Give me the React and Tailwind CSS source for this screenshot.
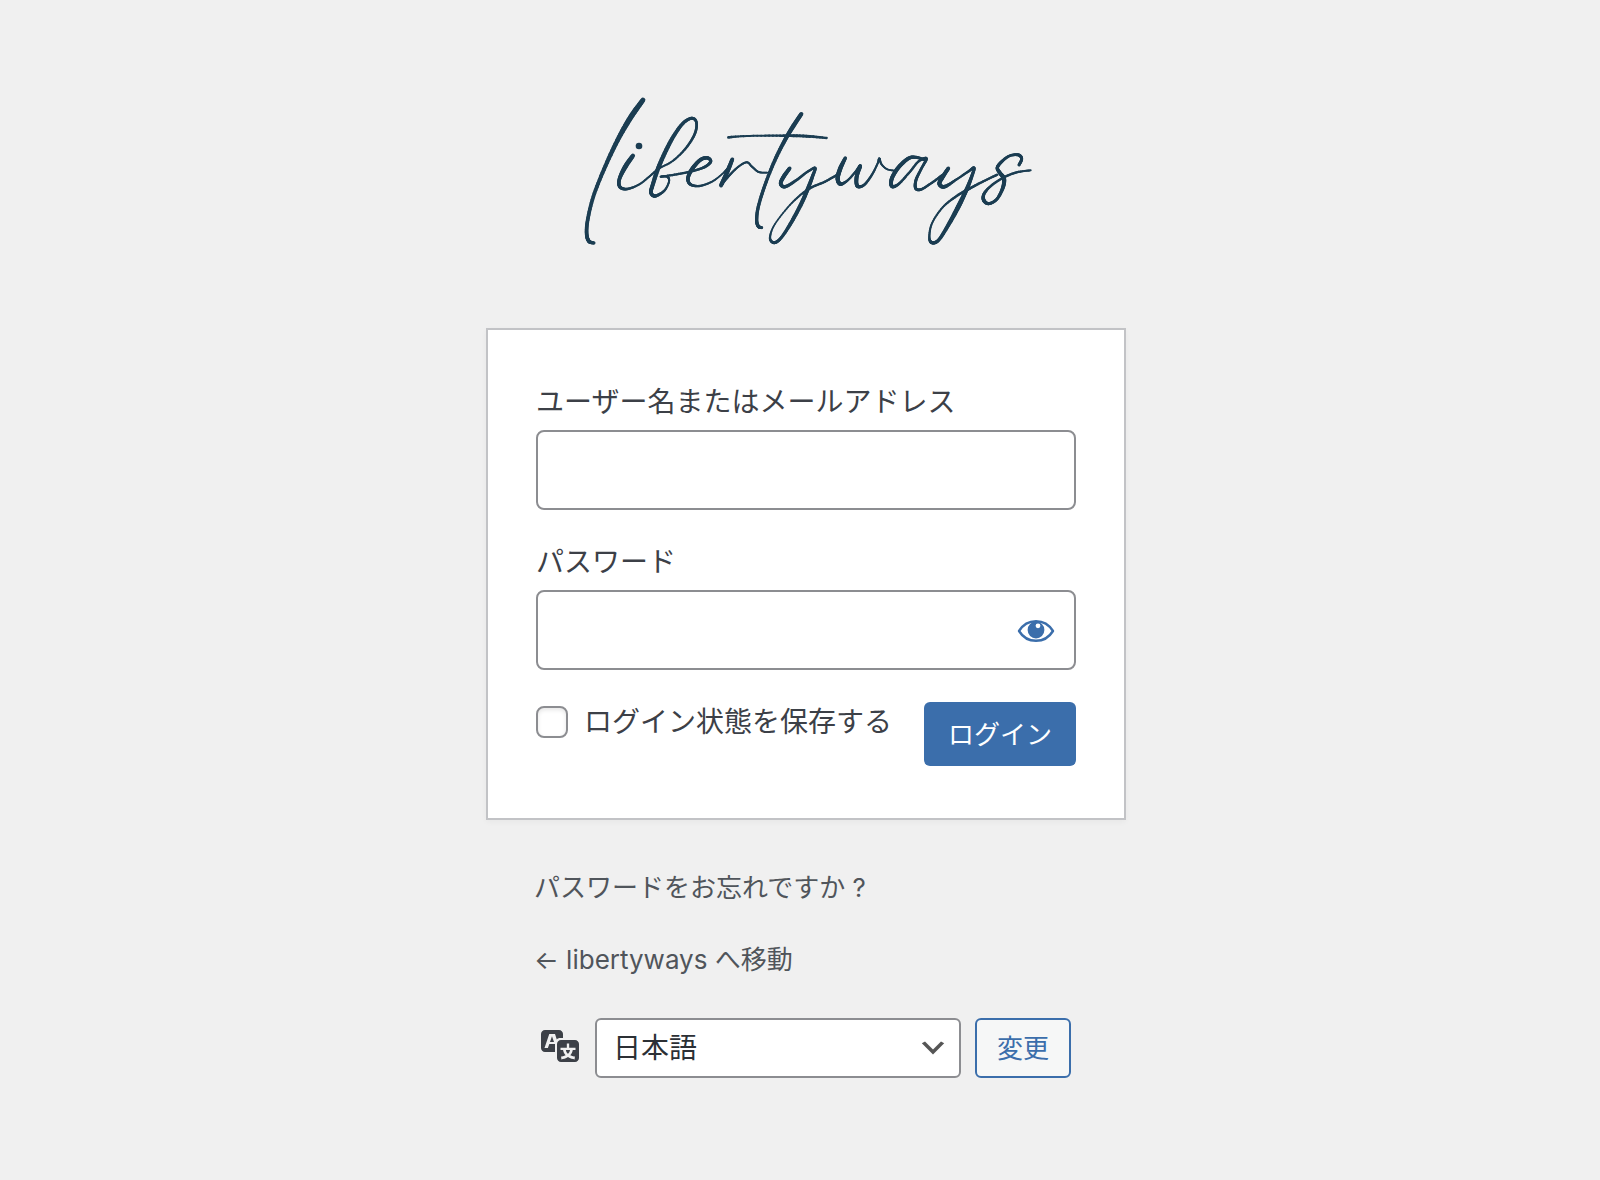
import { useMemo, useState } from "react";

// ロゴの筆跡: [x, y, 線幅] の並び
const STROKES = [
  // l
  [[219, 60, 12], [182, 112, 14], [142, 182, 12], [102, 268, 10], [70, 350, 9], [53, 420, 9], [50, 462, 9], [57, 484, 9], [72, 489, 7]],
  // i
  [[189, 227, 10], [166, 260, 12], [148, 298, 9], [150, 321, 8], [172, 327, 6], [208, 313, 4], [240, 288, 4], [266, 266, 4], [308, 243, 4], [348, 204, 5], [375, 160, 6], [379, 126, 6], [364, 115, 7], [336, 133, 8], [302, 184, 10], [268, 256, 11], [248, 315, 10], [243, 338, 9], [256, 348, 8], [283, 332, 5], [297, 305, 4], [292, 290, 5], [272, 290, 4]],
  // e
  [[272, 290, 4], [320, 283, 5], [368, 273, 5], [404, 261, 6], [422, 245, 7], [413, 234, 8], [392, 239, 9], [367, 266, 10], [354, 294, 9], [361, 313, 7], [388, 318, 5], [424, 306, 4], [452, 286, 3], [472, 266, 3]],
  // r
  [[487, 238, 9], [472, 275, 11], [453, 316, 10]],
  [[453, 316, 6], [480, 284, 5], [508, 258, 4], [531, 247, 4], [546, 260, 4], [566, 276, 4], [592, 278, 3]],
  // t
  [[694, 102, 10], [670, 138, 11], [645, 180, 10], [614, 242, 9], [585, 315, 8], [565, 380, 8], [560, 420, 8], [565, 439, 8], [575, 443, 7]],
  [[475, 172, 6], [530, 168, 4], [620, 167, 5], [700, 168, 7], [770, 174, 5]],
  // y
  [[659, 265, 9], [641, 290, 10], [632, 311, 9], [646, 320, 8], [680, 300, 6], [710, 277, 5], [735, 264, 6], [728, 288, 8], [712, 330, 10], [692, 375, 10], [661, 432, 9], [632, 475, 7], [612, 488, 7], [600, 474, 5], [612, 437, 3], [650, 386, 3], [690, 346, 4], [725, 322, 5], [765, 305, 5], [805, 282, 5]],
  // w
  [[826, 234, 8], [811, 265, 11], [803, 295, 11], [811, 312, 9], [832, 302, 5], [856, 276, 5], [871, 258, 8], [860, 290, 10], [862, 318, 9], [882, 315, 6], [906, 284, 5], [923, 250, 4], [928, 236, 5], [934, 252, 4], [950, 267, 3], [972, 272, 3]],
  // a
  [[1066, 240, 6], [1038, 232, 7], [1014, 236, 9], [984, 264, 10], [965, 297, 10], [966, 319, 9], [986, 312, 6], [1020, 275, 5], [1046, 244, 5], [1069, 236, 7], [1053, 268, 6], [1038, 300, 7], [1037, 325, 7], [1054, 328, 6], [1086, 308, 5], [1118, 285, 6]],
  // y
  [[1135, 265, 9], [1120, 288, 10], [1108, 311, 10], [1124, 320, 9], [1160, 298, 5], [1194, 275, 5], [1212, 264, 7], [1205, 290, 8], [1190, 328, 10], [1165, 380, 12], [1135, 435, 10], [1106, 480, 8], [1086, 488, 8], [1078, 472, 5], [1086, 430, 4], [1118, 382, 4], [1160, 348, 5], [1200, 325, 6], [1240, 304, 5], [1282, 284, 5]],
  // s
  [[1347, 255, 7], [1355, 237, 7], [1346, 225, 7], [1320, 227, 6], [1296, 244, 7], [1282, 263, 8], [1290, 279, 9], [1302, 297, 11], [1298, 325, 9], [1280, 358, 7], [1256, 371, 7], [1241, 360, 9], [1243, 340, 7], [1266, 315, 5], [1302, 292, 5], [1340, 277, 5], [1382, 271, 4]],
];

const STEPS = 8;
const INK = 2; // インクのにじみ分

const spline = (a, b, c, d, t) =>
  0.5 * (2 * b + (c - a) * t + (2 * a - 5 * b + 4 * c - d) * t * t + (3 * b - a - 3 * c + d) * t * t * t);

// 点の間を Catmull-Rom で補間して、幅の変わる短い線分にする
function toSegments(points) {
  const out = [];
  for (let i = 0; i < points.length - 1; i++) {
    const p0 = points[Math.max(i - 1, 0)];
    const p1 = points[i];
    const p2 = points[i + 1];
    const p3 = points[Math.min(i + 2, points.length - 1)];
    for (let s = 0; s < STEPS; s++) {
      out.push([0, 1, 2].map((k) => spline(p0[k], p1[k], p2[k], p3[k], s / STEPS)));
    }
  }
  out.push(points[points.length - 1]);
  return out.slice(1).map((p, i) => ({ from: out[i], to: p }));
}

function Logo() {
  const segments = useMemo(() => STROKES.flatMap(toSegments), []);
  return (
    <svg viewBox="-12 0 1440 540" className="w-[480px] max-w-full" stroke="#1b3d52" strokeLinecap="round" aria-hidden="true">
      {segments.map(({ from, to }, i) => (
        <line key={i} x1={from[0]} y1={from[1]} x2={to[0]} y2={to[1]} strokeWidth={to[2] + INK} />
      ))}
      <circle cx="207" cy="198" r="10" fill="#1b3d52" stroke="none" />
    </svg>
  );
}

function EyeIcon() {
  return (
    <svg viewBox="0 0 40 40" className="size-10" aria-hidden="true">
      <path d="M3 21C7 14.500 13 11.200 20 11.200S33 14.500 37 21C33 27.500 27 30.800 20 30.800S7 27.500 3 21Z" fill="none" stroke="currentColor" strokeWidth="2.400" strokeLinejoin="round" />
      <circle cx="20" cy="20" r="8.400" fill="currentColor" />
      <circle cx="22" cy="15.800" r="2.400" fill="#fff" />
    </svg>
  );
}

function TranslateIcon() {
  return (
    <svg viewBox="0 0 20 20" className="size-10 shrink-0" fill="currentColor" aria-hidden="true">
      <path d="M11 7H9.490c-.63 0-1.250.3-1.590.7L7 5H4.130l-2.390 7h1.690l.74-2H7v4H2c-1.100 0-2-.9-2-2V5c0-1.100.9-2 2-2h7c1.100 0 2 .9 2 2v2zM6.510 9H4.490l1-2.930zM10 8h7c1.100 0 2 .9 2 2v7c0 1.100-.9 2-2 2h-7c-1.100 0-2-.9-2-2v-7c0-1.100.9-2 2-2zm7.250 5v-1.080h-3.170V9.750h-1.160v2.170H9.750V13h1.280c.11.85.56 1.850 1.280 2.620-.87.36-1.890.62-2.310.62-.01.02.22.97.2 1.460.84 0 2.210-.5 3.280-1.150 1.090.65 2.480 1.150 3.340 1.150-.02-.49.2-1.440.2-1.460-.43 0-1.490-.27-2.380-.63.7-.77 1.140-1.770 1.250-2.610h1.360zm-3.810 1.930c-.5-.46-.85-1.130-1.010-1.930h2.090c-.17.8-.51 1.470-1 1.930l-.04.03s-.03-.02-.04-.03z" />
    </svg>
  );
}

const INPUT = "block w-full h-20 rounded-lg border-2 border-[#8c8d91] bg-white px-2.5 text-[48px] text-[#2c3338] outline-none focus:border-[#3b6eab]";

export default function App() {
  const [showPassword, setShowPassword] = useState(false);

  return (
    <div className="min-h-screen bg-[#f0f0f0] pt-20 pb-12 pl-3 text-[#3c4047] font-['Inter','Noto_Sans_CJK_JP',sans-serif]" lang="ja">
      <main className="mx-auto w-full max-w-[640px]">
        <h1 className="mb-[68px] flex justify-center">
          <a href="#home" aria-label="libertyways"><Logo /></a>
        </h1>

        {/* ログインフォーム */}
        <form
          className="border-2 border-[#c2c3c6] bg-white px-12 py-[52px] shadow-[0_2px_6px_rgba(0,0,0,0.04)]"
          onSubmit={(e) => e.preventDefault()}
        >
          <div className="mb-8">
            <label htmlFor="user" className="mb-2 block text-[28px] leading-10">ユーザー名またはメールアドレス</label>
            <input id="user" type="text" autoComplete="username" className={INPUT} />
          </div>

          <div className="mb-8">
            <label htmlFor="pass" className="mb-2 block text-[28px] leading-10">パスワード</label>
            <div className="relative">
              <input id="pass" type={showPassword ? "text" : "password"} autoComplete="current-password" className={INPUT} />
              <button
                type="button"
                aria-label="パスワードを表示"
                className="absolute inset-y-0 right-0 flex w-20 items-center justify-center text-[#3b6eab] cursor-pointer"
                onClick={() => setShowPassword(!showPassword)}
              >
                <EyeIcon />
              </button>
            </div>
          </div>

          <div className="flex items-start justify-between">
            <div className="flex items-center gap-4">
              <input
                id="remember"
                type="checkbox"
                className="size-8 appearance-none rounded-lg border-2 border-[#8c8d91] bg-white shadow-[inset_0_2px_4px_rgba(0,0,0,0.1)] checked:bg-[#3b6eab]"
              />
              <label htmlFor="remember" className="text-[28px] leading-10">ログイン状態を保存する</label>
            </div>
            <button type="submit" className="h-16 rounded-md bg-[#3b6eab] px-6 text-[26px] text-white cursor-pointer">ログイン</button>
          </div>
        </form>

        <nav className="mt-12 flex flex-col items-start gap-8 px-12 text-[26px] leading-10 text-[#50555b]">
          <a href="#lost">パスワードをお忘れですか ?</a>
          <a href="#home">← libertyways へ移動</a>
        </nav>

        {/* 言語切り替え */}
        <form className="mx-auto mt-[38px] flex max-w-[530px] items-center gap-3.5" onSubmit={(e) => e.preventDefault()}>
          <label htmlFor="lang" aria-label="言語" className="-mt-2 text-[#3c4047]"><TranslateIcon /></label>
          <div className="relative flex-1">
            <select id="lang" defaultValue="ja" className="block h-[60px] w-full appearance-none rounded-md border-2 border-[#8c8d91] bg-white pl-4 pr-12 text-[28px] text-[#2c3035]">
              <option value="ja">日本語</option>
            </select>
            <svg viewBox="0 0 20 20" className="pointer-events-none absolute right-3 top-3.5 size-8" fill="#555" aria-hidden="true">
              <path d="M5 6l5 5 5-5 2 1-7 7-7-7 2-1z" />
            </svg>
          </div>
          <button type="submit" className="h-[60px] rounded-md border-2 border-[#3b6eab] bg-[#f6f7f7] px-5 text-[26px] text-[#3b6eab] cursor-pointer">変更</button>
        </form>
      </main>
    </div>
  );
}
